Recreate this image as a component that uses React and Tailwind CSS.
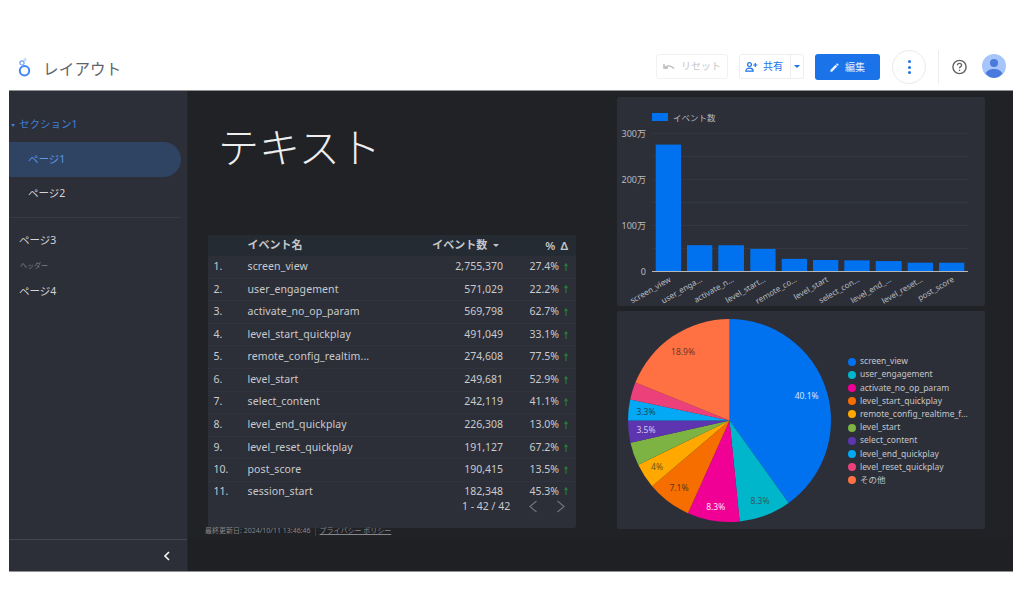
import React from "react";

const rows = [
  ["1.", "screen_view", "2,755,370", "27.4%"],
  ["2.", "user_engagement", "571,029", "22.2%"],
  ["3.", "activate_no_op_param", "569,798", "62.7%"],
  ["4.", "level_start_quickplay", "491,049", "33.1%"],
  ["5.", "remote_config_realtim...", "274,608", "77.5%"],
  ["6.", "level_start", "249,681", "52.9%"],
  ["7.", "select_content", "242,119", "41.1%"],
  ["8.", "level_end_quickplay", "226,308", "13.0%"],
  ["9.", "level_reset_quickplay", "191,127", "67.2%"],
  ["10.", "post_score", "190,415", "13.5%"],
  ["11.", "session_start", "182,348", "45.3%"],
];

const bars = [
  [655.7, 25.3, 2755370, "screen_view"],
  [687, 25.3, 571029, "user_enga…"],
  [718.3, 25.7, 569798, "activate_n…"],
  [750.3, 25.3, 491049, "level_start…"],
  [781.7, 25.3, 274608, "remote_co…"],
  [813, 25.3, 249681, "level_start"],
  [844.3, 25.3, 242119, "select_con…"],
  [875.7, 26, 226308, "level_end_…"],
  [907.7, 25.3, 191127, "level_reset…"],
  [939, 25.3, 190415, "post_score"],
];

const slices = [
  [40.1, "#0072f0"],
  [8.3, "#00b6cb"],
  [8.3, "#f10096"],
  [7.1, "#f66d00"],
  [4, "#ffa800"],
  [3.7, "#7cb342"],
  [3.5, "#5e35b1"],
  [3.3, "#03a9f4"],
  [2.8, "#ec407a"],
  [18.9, "#ff7043"],
];

const legend = [
  ["screen_view", "#0072f0"],
  ["user_engagement", "#00b6cb"],
  ["activate_no_op_param", "#f10096"],
  ["level_start_quickplay", "#f66d00"],
  ["remote_config_realtime_f…", "#ffa800"],
  ["level_start", "#7cb342"],
  ["select_content", "#5e35b1"],
  ["level_end_quickplay", "#03a9f4"],
  ["level_reset_quickplay", "#ec407a"],
  ["その他", "#ff7043"],
];

function Pie() {
  const cx = 112.5, cy = 109.5, r = 101.5;
  let acc = 0;
  const paths = slices.map(([v, c]) => {
    const a0 = (acc / 100) * 2 * Math.PI;
    acc += v;
    const a1 = (acc / 100) * 2 * Math.PI;
    const x0 = cx + r * Math.sin(a0), y0 = cy - r * Math.cos(a0);
    const x1 = cx + r * Math.sin(a1), y1 = cy - r * Math.cos(a1);
    const large = v > 50 ? 1 : 0;
    return <path key={c} fill={c} d={`M${cx} ${cy}L${x0} ${y0}A${r} ${r} 0 ${large} 1 ${x1} ${y1}Z`} />;
  });
  const labels = [
    ["40.1%", 189.6, 88, "#d6e6ff"],
    ["8.3%", 143, 193, "#33565f"],
    ["8.3%", 98.7, 199, "#ffe3f3"],
    ["7.1%", 62, 180, "#5a3a1c"],
    ["4%", 40, 159, "#6b5518"],
    ["3.5%", 29, 122, "#d5c9ee"],
    ["3.3%", 29, 104, "#17485f"],
    ["18.9%", 66, 44, "#6a3a28"],
  ];
  return (
    <svg width="230" height="218" viewBox="0 0 230 218" className="shrink-0">
      {paths}
      {labels.map(([t, x, y, c]) => (
        <text key={t + x} x={x} y={y} fill={c} fontSize="8.5" textAnchor="middle" fontFamily="'Noto Sans', sans-serif">{t}</text>
      ))}
    </svg>
  );
}

function BarChart() {
  const ox = 617, oy = 97;
  const base = 271.5 - oy;
  const scale = 138.2 / 3000000;
  const grid = [0.5, 1, 1.5, 2, 2.5, 3];
  return (
    <svg width="368" height="209" viewBox="0 0 368 209" className="block">
      <rect x="35" y="16" width="16" height="8" fill="#0072f0" />
      <text x="56" y="23.5" fontSize="8.5" fill="#b4b6bb" fontFamily="'Noto Sans CJK JP', sans-serif">イベント数</text>
      {grid.map((g) => (
        <line key={g} x1="35" x2="351" y1={base - g * 46.07} y2={base - g * 46.07} stroke="#353842" strokeWidth="1" />
      ))}
      {[["300万", 3], ["200万", 2], ["100万", 1], ["0", 0]].map(([t, g]) => (
        <text key={t} x="29" y={base - g * 46.07 + 3.5} fontSize="9" fill="#b9bbc0" textAnchor="end" fontFamily="'Noto Sans', 'Noto Sans CJK JP', sans-serif">{t}</text>
      ))}
      {bars.map(([x, w, v]) => (
        <rect key={x} x={x - ox} width={w} y={base - v * scale} height={v * scale} fill="#0072f0" />
      ))}
      <line x1="35" x2="351" y1={base} y2={base} stroke="#b5b7bb" strokeWidth="1" />
      {bars.map(([x, w, , t]) => (
        <text
          key={t}
          x={x - ox + w / 2 + 3}
          y={base + 9.5}
          fontSize="8"
          fill="#b9bbc0"
          textAnchor="end"
          transform={`rotate(-30 ${x - ox + w / 2 + 3} ${base + 9.5})`}
          fontFamily="'Noto Sans', sans-serif"
        >
          {t}
        </text>
      ))}
    </svg>
  );
}

function Logo() {
  return (
    <svg width="17" height="24" viewBox="0 0 17 24">
      <circle cx="8.5" cy="12.7" r="4.7" fill="none" stroke="#4285f4" strokeWidth="2" />
      <circle cx="6" cy="4.9" r="2.1" fill="none" stroke="#6f9ff0" strokeWidth="1.2" />
      <circle cx="9.2" cy="1.6" r="1.1" fill="none" stroke="#a9c6f7" strokeWidth="0.9" />
    </svg>
  );
}

export default function App() {
  return (
    <div className="w-[1024px] h-[614px] bg-white overflow-hidden pt-[50px] font-['Noto_Sans','Noto_Sans_CJK_JP',sans-serif]">
      {/* top bar */}
      <header className="h-[40px] flex items-start pl-[16px]">
        <div className="flex items-center h-[30px] mt-[5px]">
          <Logo />
          <span className="ml-[10px] text-[15.5px] text-[#5f6368] tracking-[0.2px]">レイアウト</span>
        </div>
        <div className="ml-auto flex items-start pr-[18px] pt-[4px]">
          <button className="w-[72px] h-[25px] border border-[#f0f1f2] rounded-[3px] flex items-center justify-center gap-[6px] text-[10px] text-[#c4c6c9]">
            <svg width="12" height="8" viewBox="0 0 12 8">
              <path d="M1 1v4h4M1.5 5C3 2.6 6.8 1.6 11 5.5" fill="none" stroke="#b4b6b9" strokeWidth="1.4" />
            </svg>
            リセット
          </button>
          <div className="ml-[11px] w-[65px] h-[25px] border border-[#eceef0] rounded-[3px] flex items-center text-[10px] text-[#1a73e8]">
            <div className="w-[48px] flex items-center justify-center gap-[5px]">
              <svg width="13" height="10" viewBox="0 0 13 10">
                <circle cx="4.5" cy="2.6" r="1.9" fill="none" stroke="#1a73e8" strokeWidth="1.2" />
                <path d="M.8 9.2c0-2 1.8-3 3.7-3s3.7 1 3.7 3z" fill="none" stroke="#1a73e8" strokeWidth="1.2" />
                <path d="M10.3 1v4M8.3 3h4" stroke="#1a73e8" strokeWidth="1.2" />
              </svg>
              共有
            </div>
            <div className="flex-1 h-full ml-[2px] border-l border-[#eceef0] flex items-center justify-center">
              <div className="w-0 h-0 border-x-[3px] border-x-transparent border-t-[3px] border-t-[#1a73e8]" />
            </div>
          </div>
          <button className="ml-[11px] w-[65px] h-[26px] bg-[#1a73e8] rounded-[3px] flex items-center justify-center gap-[5px] pr-[1px] text-[10px] text-[#e3eefc]">
            <svg width="11" height="11" viewBox="0 0 24 24">
              <path fill="#e8f0fe" d="M3 17.25V21h3.75L17.81 9.94l-3.75-3.75L3 17.25zM20.71 7.04a1 1 0 0 0 0-1.41l-2.34-2.34a1 1 0 0 0-1.41 0l-1.83 1.83 3.75 3.75 1.83-1.83z" />
            </svg>
            編集
          </button>
          <button className="ml-[12px] -mt-[4px] w-[34px] h-[34px] rounded-full border border-[#e8eaed] flex flex-col items-center justify-center gap-[2.5px]">
            <span className="w-[3px] h-[3px] rounded-full bg-[#1a73e8]" />
            <span className="w-[3px] h-[3px] rounded-full bg-[#1a73e8]" />
            <span className="w-[3px] h-[3px] rounded-full bg-[#1a73e8]" />
          </button>
          <div className="ml-[12px] -mt-[4px] w-px h-[34px] bg-[#eceef0]" />
          <svg className="ml-[12px]" width="17" height="26" viewBox="0 0 17 26">
            <circle cx="8.5" cy="13" r="6.6" fill="none" stroke="#5f6368" strokeWidth="1.4" />
            <path d="M6.4 11.3c0-1.2 1-2 2.1-2s2.1.8 2.1 1.9c0 1.4-2.1 1.5-2.1 3.1" fill="none" stroke="#5f6368" strokeWidth="1.3" />
            <circle cx="8.5" cy="16.2" r=".8" fill="#5f6368" />
          </svg>
          <svg className="ml-[14px]" width="24" height="24" viewBox="0 0 24 24">
            <circle cx="12" cy="12" r="12" fill="#a6c5fa" />
            <circle cx="12" cy="9" r="4" fill="#4a7bdc" />
            <path d="M3.6 19.5C5 16.2 8.500 15 12 15s7 1.200 8.400 4.500A12 12 0 0 1 12 24a12 12 0 0 1-8.400-4.500z" fill="#4a7bdc" />
          </svg>
        </div>
      </header>

      {/* report frame */}
      <div className="ml-[9px] w-[1004px] h-[482px] flex border-t border-b border-[#8f9194] bg-[#1f2023]">
        {/* sidebar */}
        <aside className="w-[179px] shrink-0 bg-[#2c2f38] border-r border-[#24262b] flex flex-col">
          <div className="flex-1 pt-[27px]">
            <div className="flex items-center h-[14px] pl-[2px] text-[10.5px] text-[#3f7fd6]">
              <span className="w-0 h-0 border-x-[2.500px] border-x-transparent border-t-[3px] border-t-[#3f7fd6] mr-[4px]" />
              セクション1
            </div>
            <div className="mt-[10px] w-[172px] h-[35px] rounded-r-[18px] bg-[#2f4363] flex items-center pl-[19px] text-[10.5px] text-[#5c97e8]">ページ1</div>
            <div className="mt-[9px] h-[16px] flex items-center pl-[19px] text-[10.5px] text-[#d3d4d7]">ページ2</div>
            <div className="mt-[15px] w-[172px] h-px bg-[#373a43]" />
            <div className="mt-[15px] h-[16px] flex items-center pl-[10px] text-[10.5px] text-[#d3d4d7]">ページ3</div>
            <div className="mt-[12px] h-[10px] flex items-center pl-[11px] text-[7px] text-[#7e8087]">ヘッダー</div>
            <div className="mt-[13px] h-[16px] flex items-center pl-[10px] text-[10.5px] text-[#d3d4d7]">ページ4</div>
          </div>
          <div className="h-[32px] border-t border-[#444750] flex items-center justify-end pr-[16px]">
            <svg width="8" height="10" viewBox="0 0 8 10">
              <path d="M6 1 2 5l4 4" fill="none" stroke="#f1f1f2" strokeWidth="1.700" />
            </svg>
          </div>
        </aside>

        {/* canvas */}
        <main className="flex-1 flex flex-col">
          <div className="h-[446px] bg-[#212226] flex">
            {/* left column */}
            <div className="w-[429px] shrink-0 flex flex-col pl-[20px]">
              <h1 className="mt-[29px] ml-[10px] h-[55px] text-[41px] leading-[55px] font-light text-[#eeeeee] whitespace-nowrap">テキスト</h1>
              <section className="mt-[60px] w-[368px] h-[293px] bg-[#2c2f38] rounded-[2px] text-[10.500px] text-[#c9cacd] overflow-hidden">
                <div className="h-[21px] bg-[#252b33] flex items-center font-semibold text-[#c4c6c9]">
                  <span className="ml-[39.500px] text-[11px]">イベント名</span>
                  <span className="ml-auto text-[11px]">イベント数</span>
                  <span className="ml-[6px] w-0 h-0 border-x-[3px] border-x-transparent border-t-[3.500px] border-t-[#c4c6c9]" />
                  <span className="ml-[46px] mr-[7px] text-[11.500px] tracking-[1px]">% Δ</span>
                </div>
                {rows.map((r, i) => (
                  <div key={r[0]} className={`flex ${i === 10 ? "h-[15px] items-start leading-[19px] overflow-hidden" : "items-center h-[22.600px] border-b border-[#31343e]"}`}>
                    <span className="w-[39.500px] pl-[5.500px] shrink-0">{r[0]}</span>
                    <span className="flex-1 tracking-[0.1px]">{r[1]}</span>
                    <span className="w-[80px] text-right">{r[2]}</span>
                    <span className="w-[56px] text-right">{r[3]}</span>
                    <span className={`w-[17px] pl-[5px] flex items-center ${i === 10 ? "h-[19px]" : ""}`}>
                      <svg width="4" height="8" viewBox="0 0 4 8">
                        <path d="M2 8V1M.5 3 2 .8 3.500 3" fill="none" stroke="#2a7d38" strokeWidth="1.100" />
                      </svg>
                    </span>
                  </div>
                ))}
                <div className="h-[19px] flex items-center bg-[#2c2f38]">
                  <span className="ml-[254px] w-[49px] text-[10.500px] whitespace-nowrap">1 - 42 / 42</span>
                  <svg className="ml-[17px]" width="10" height="13" viewBox="0 0 10 13">
                    <path d="M8.500 1 2 6.500 8.500 12" fill="none" stroke="#70737a" strokeWidth="1.200" />
                  </svg>
                  <svg className="ml-[18px]" width="10" height="13" viewBox="0 0 10 13">
                    <path d="M1.500 1 8 6.500 1.500 12" fill="none" stroke="#70737a" strokeWidth="1.200" />
                  </svg>
                </div>
              </section>
            </div>
            {/* right column */}
            <div className="w-[368px] shrink-0 pt-[6px] flex flex-col gap-[5px]">
              <section className="h-[209px] bg-[#2c2f38] rounded-[2px]">
                <BarChart />
              </section>
              <section className="h-[218px] bg-[#2c2f38] rounded-[2px] flex">
                <Pie />
                <ul className="ml-[1px] pt-[44px] text-[8.500px] text-[#c4c6c9]">
                  {legend.map(([t, c]) => (
                    <li key={t} className="h-[13.200px] flex items-center gap-[4px] whitespace-nowrap">
                      <span className="w-[8px] h-[8px] rounded-full shrink-0" style={{ backgroundColor: c }} />
                      {t}
                    </li>
                  ))}
                </ul>
              </section>
            </div>
          </div>
          <div className="-mt-[12px] pl-[17px] h-[12px] flex items-center text-[7px] text-[#85878c]">
            <span>最終更新日: 2024/10/11 13:46:46</span>
            <span className="ml-[4px] mr-[4px] w-px h-[9px] bg-[#3a3c41]" />
            <span className="underline">プライバシー ポリシー</span>
          </div>
        </main>
      </div>
    </div>
  );
}
